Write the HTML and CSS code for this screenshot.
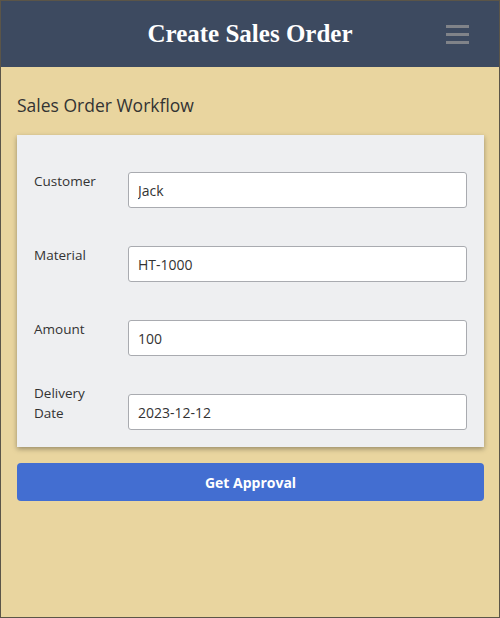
FILE: index.html
```html
<!DOCTYPE html>
<html lang="en">
<head>
<meta charset="utf-8">
<title>Create Sales Order</title>
<link rel="stylesheet" href="styles.css">
</head>
<body>
<div class="frame">
  <header class="topbar">
    <h1 class="title">Create Sales Order</h1>
    <button class="menu" aria-label="Menu">
      <span class="bar"></span><span class="bar"></span><span class="bar"></span>
    </button>
  </header>
  <main class="content">
    <h2 class="heading">Sales Order Workflow</h2>
    <form class="card">
      <div class="row">
        <label class="label" for="customer">Customer</label>
        <input class="field" id="customer" value="Jack">
      </div>
      <div class="row">
        <label class="label" for="material">Material</label>
        <input class="field" id="material" value="HT-1000">
      </div>
      <div class="row">
        <label class="label" for="amount">Amount</label>
        <input class="field" id="amount" value="100">
      </div>
      <div class="row">
        <label class="label" for="date">Delivery<br>Date</label>
        <input class="field" id="date" value="2023-12-12">
      </div>
    </form>
    <button class="approve" type="button">Get Approval</button>
  </main>
</div>
</body>
</html>
```
FILE: styles.css
```css
* { box-sizing: border-box; }
html, body { margin: 0; padding: 0; height: 100%; }
body {
  font-family: "Open Sans", "Noto Sans", sans-serif;
  color: #333;
  background: #e9d59f;
}
.frame {
  height: 618px;
  border: 1px solid #5b5548;
  background: #e9d59f;
  display: flex;
  flex-direction: column;
}
.topbar {
  height: 66px;
  background: #3d4a60;
  display: flex;
  align-items: center;
  justify-content: center;
  position: relative;
}
.title {
  margin: 0;
  font-family: "Liberation Serif", "Times New Roman", serif;
  font-weight: bold;
  font-size: 25px;
  color: #fff;
}
.menu {
  position: absolute;
  right: 30px;
  top: 24px;
  width: 23px;
  padding: 0;
  border: 0;
  background: none;
  display: flex;
  flex-direction: column;
  gap: 5px;
}
.bar {
  display: block;
  height: 3px;
  width: 23px;
  background: #808389;
}
.content {
  padding: 0 15px 0 16px;
}
.heading {
  margin: 26px 0 18px;
  font-weight: normal;
  font-size: 17.5px;
  line-height: 24px;
  color: #333;
}
.card {
  background: #eeeff1;
  box-shadow: 0 2px 5px rgba(0,0,0,0.35);
  padding: 19px 17px 17px;
  display: flex;
  flex-direction: column;
  gap: 20px;
}
.row {
  display: flex;
  align-items: center;
  min-height: 54px;
}
.label {
  width: 94px;
  flex: none;
  font-size: 13.5px;
  line-height: 20px;
  color: #333;
}
.field {
  flex: 1;
  margin-top: 18px;
  height: 36px;
  border: 1px solid #a9abb0;
  border-radius: 3px;
  background: #fff;
  padding: 0 9px;
  font-family: "Open Sans", "Noto Sans", sans-serif;
  font-size: 14px;
  color: #333;
}
.approve {
  margin-top: 16px;
  width: 100%;
  height: 38px;
  border: 0;
  border-radius: 4px;
  background: #436ed1;
  color: #fff;
  font-family: "Open Sans", "Noto Sans", sans-serif;
  font-weight: bold;
  font-size: 14px;
}
```
